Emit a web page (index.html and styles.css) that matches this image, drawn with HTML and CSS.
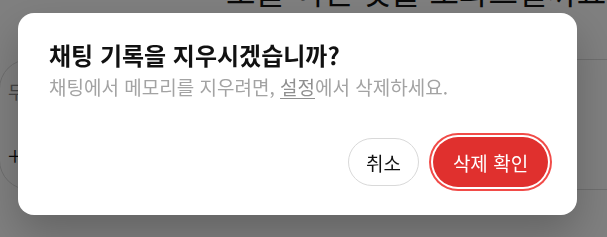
FILE: index.html
```html
<!DOCTYPE html>
<html lang="ko">
<head>
<meta charset="utf-8">
<title>채팅 기록 삭제</title>
<link rel="stylesheet" href="styles.css">
</head>
<body>
<div class="page">
  <h1 class="greeting">오늘 어떤 것을 도와드릴까요</h1>
  <div class="composer">
    <div class="placeholder">무엇이든 물어보세요</div>
    <div class="plus">+</div>
  </div>
</div>
<div class="overlay">
  <div class="modal" role="dialog" aria-modal="true">
    <h2 class="modal-title">채팅 기록을 지우시겠습니까?</h2>
    <p class="modal-text">채팅에서 메모리를 지우려면, <a class="link" href="#">설정</a>에서 삭제하세요.</p>
    <div class="actions">
      <button class="btn btn-cancel">취소</button>
      <button class="btn btn-danger">삭제 확인</button>
    </div>
  </div>
</div>
</body>
</html>
```

FILE: styles.css
```css
* { box-sizing: border-box; }
html, body {
  margin: 0;
  padding: 0;
  width: 607px;
  height: 237px;
  overflow: hidden;
  background: #ffffff;
  font-family: "Noto Sans CJK KR", "Noto Sans", sans-serif;
}
.page {
  position: relative;
}
.greeting {
  margin: -30px 0 0 0;
  padding-left: 226px;
  font-size: 32px;
  font-weight: 400;
  line-height: 40px;
  color: #111;
  white-space: nowrap;
}
.composer {
  margin: 49px -60px 0 -1px;
  height: 131px;
  border: 1px solid #dcdcdc;
  border-radius: 30px;
  display: flex;
  flex-direction: column;
  justify-content: space-between;
  padding: 18px 8px 20px;
}
.placeholder {
  font-size: 18px;
  line-height: 26px;
  color: #8a8a8a;
  white-space: nowrap;
}
.plus {
  font-size: 26px;
  line-height: 28px;
  color: #111;
  font-weight: 300;
}
.overlay {
  position: fixed;
  inset: 0;
  background: rgba(0, 0, 0, 0.5);
  padding: 13px 30px 22px 18px;
}
.modal {
  background: #fff;
  border-radius: 16px;
  height: 202px;
  padding: 26px 29px 28px 31px;
  box-shadow: 0 18px 40px rgba(0, 0, 0, 0.22);
  display: flex;
  flex-direction: column;
}
.modal-title {
  margin: 0;
  font-size: 24px;
  line-height: 32px;
  font-weight: 700;
  color: #111;
  white-space: nowrap;
}
.modal-text {
  margin: 3px 0 0 0;
  font-size: 19px;
  line-height: 26px;
  color: #a3a3a3;
  white-space: nowrap;
}
.link {
  color: #8f8f8f;
  text-decoration: underline;
  text-underline-offset: 3px;
}
.actions {
  margin-top: auto;
  display: flex;
  justify-content: flex-end;
  align-items: center;
  gap: 14px;
}
.btn {
  font-family: inherit;
  font-size: 19px;
  border-radius: 999px;
  cursor: pointer;
  padding: 0;
  display: flex;
  align-items: center;
  justify-content: center;
}
.btn-cancel {
  height: 48px;
  width: 71px;
  background: #fff;
  border: 1px solid #d9d9d9;
  color: #111;
}
.btn-danger {
  height: 50px;
  width: 115px;
  background: #e0302e;
  border: none;
  color: #fff;
  box-shadow: 0 0 0 2px #fff, 0 0 0 4px #f14b48;
}
```
